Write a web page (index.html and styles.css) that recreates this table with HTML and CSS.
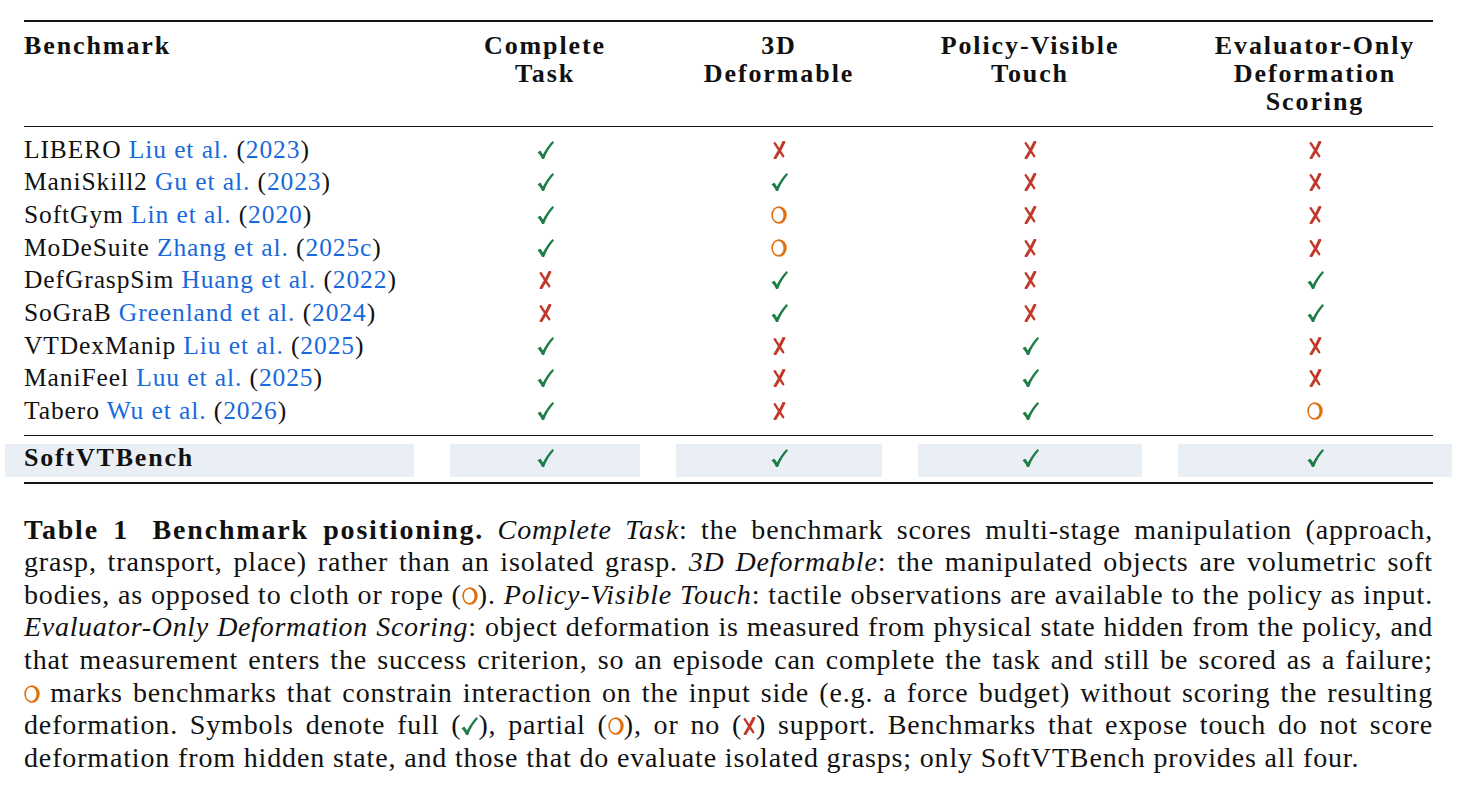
FILE: index.html
```html
<!DOCTYPE html>
<html>
<head>
<meta charset="utf-8">
<link rel="stylesheet" href="styles.css">
</head>
<body>
<svg class="defs" aria-hidden="true">
  <symbol id="ck" viewBox="0 0 17 18">
    <path fill="#1e7d46" d="M0.5 11.2 C1.7 10.3 2.8 9.8 3.6 9.7 L5.9 13.6 C8.4 8.6 11.7 4 15.6 0 L17 1.6 C12.8 6.3 9.5 11.8 7.1 17.9 L5 17.9 C3.8 15.4 2.3 13 0.5 11.2 Z"/>
  </symbol>
  <symbol id="cx" viewBox="0 0 14 18">
    <path d="M11.8 1.2 C9.4 6.6 6.4 12 3.1 17" stroke="#c0392b" stroke-width="3" fill="none" stroke-linecap="round"/>
    <path d="M2.7 2.2 C5.2 6.2 8 10.4 11.2 15.2" stroke="#c0392b" stroke-width="2.4" fill="none" stroke-linecap="round"/>
  </symbol>
  <symbol id="co" viewBox="0 0 16 18">
    <path fill="#e0700e" fill-rule="evenodd" d="M8 0.3 A7.7 8.7 0 1 1 8 17.7 A7.7 8.7 0 1 1 8 0.3 Z M7.2 1.9 A5.3 7.1 0 1 0 7.2 16.1 A5.3 7.1 0 1 0 7.2 1.9 Z"/>
  </symbol>
</svg>

<div class="page">
  <div class="rule thick"></div>
  <div class="row head">
    <div class="first">Benchmark</div>
    <div class="c">Complete<br>Task</div>
    <div class="c">3D<br>Deformable</div>
    <div class="c">Policy-Visible<br>Touch</div>
    <div class="c">Evaluator-Only<br>Deformation<br>Scoring</div>
  </div>
  <div class="rule"></div>

  <div class="tbody">
    <div class="row">
      <div class="first">LIBERO <span class="cite">Liu et al.</span> (<span class="cite">2023</span>)</div>
      <div class="c"><svg class="s ck"><use href="#ck"/></svg></div>
      <div class="c"><svg class="s cx"><use href="#cx"/></svg></div>
      <div class="c"><svg class="s cx"><use href="#cx"/></svg></div>
      <div class="c"><svg class="s cx"><use href="#cx"/></svg></div>
    </div>
    <div class="row">
      <div class="first">ManiSkill2 <span class="cite">Gu et al.</span> (<span class="cite">2023</span>)</div>
      <div class="c"><svg class="s ck"><use href="#ck"/></svg></div>
      <div class="c"><svg class="s ck"><use href="#ck"/></svg></div>
      <div class="c"><svg class="s cx"><use href="#cx"/></svg></div>
      <div class="c"><svg class="s cx"><use href="#cx"/></svg></div>
    </div>
    <div class="row">
      <div class="first">SoftGym <span class="cite">Lin et al.</span> (<span class="cite">2020</span>)</div>
      <div class="c"><svg class="s ck"><use href="#ck"/></svg></div>
      <div class="c"><svg class="s co"><use href="#co"/></svg></div>
      <div class="c"><svg class="s cx"><use href="#cx"/></svg></div>
      <div class="c"><svg class="s cx"><use href="#cx"/></svg></div>
    </div>
    <div class="row">
      <div class="first">MoDeSuite <span class="cite">Zhang et al.</span> (<span class="cite">2025c</span>)</div>
      <div class="c"><svg class="s ck"><use href="#ck"/></svg></div>
      <div class="c"><svg class="s co"><use href="#co"/></svg></div>
      <div class="c"><svg class="s cx"><use href="#cx"/></svg></div>
      <div class="c"><svg class="s cx"><use href="#cx"/></svg></div>
    </div>
    <div class="row">
      <div class="first">DefGraspSim <span class="cite">Huang et al.</span> (<span class="cite">2022</span>)</div>
      <div class="c"><svg class="s cx"><use href="#cx"/></svg></div>
      <div class="c"><svg class="s ck"><use href="#ck"/></svg></div>
      <div class="c"><svg class="s cx"><use href="#cx"/></svg></div>
      <div class="c"><svg class="s ck"><use href="#ck"/></svg></div>
    </div>
    <div class="row">
      <div class="first">SoGraB <span class="cite">Greenland et al.</span> (<span class="cite">2024</span>)</div>
      <div class="c"><svg class="s cx"><use href="#cx"/></svg></div>
      <div class="c"><svg class="s ck"><use href="#ck"/></svg></div>
      <div class="c"><svg class="s cx"><use href="#cx"/></svg></div>
      <div class="c"><svg class="s ck"><use href="#ck"/></svg></div>
    </div>
    <div class="row">
      <div class="first">VTDexManip <span class="cite">Liu et al.</span> (<span class="cite">2025</span>)</div>
      <div class="c"><svg class="s ck"><use href="#ck"/></svg></div>
      <div class="c"><svg class="s cx"><use href="#cx"/></svg></div>
      <div class="c"><svg class="s ck"><use href="#ck"/></svg></div>
      <div class="c"><svg class="s cx"><use href="#cx"/></svg></div>
    </div>
    <div class="row">
      <div class="first">ManiFeel <span class="cite">Luu et al.</span> (<span class="cite">2025</span>)</div>
      <div class="c"><svg class="s ck"><use href="#ck"/></svg></div>
      <div class="c"><svg class="s cx"><use href="#cx"/></svg></div>
      <div class="c"><svg class="s ck"><use href="#ck"/></svg></div>
      <div class="c"><svg class="s cx"><use href="#cx"/></svg></div>
    </div>
    <div class="row">
      <div class="first">Tabero <span class="cite">Wu et al.</span> (<span class="cite">2026</span>)</div>
      <div class="c"><svg class="s ck"><use href="#ck"/></svg></div>
      <div class="c"><svg class="s cx"><use href="#cx"/></svg></div>
      <div class="c"><svg class="s ck"><use href="#ck"/></svg></div>
      <div class="c"><svg class="s co"><use href="#co"/></svg></div>
    </div>
  </div>

  <div class="rule"></div>
  <div class="row hl">
    <div class="first"><b class="bname">SoftVTBench</b></div>
    <div class="c"><svg class="s ck"><use href="#ck"/></svg></div>
    <div class="c"><svg class="s ck"><use href="#ck"/></svg></div>
    <div class="c"><svg class="s ck"><use href="#ck"/></svg></div>
    <div class="c"><svg class="s ck"><use href="#ck"/></svg></div>
  </div>
  <div class="rule thick bottom"></div>

  <div class="caption">
    <span class="ln"><b class="lbl">Table 1</b> <b class="bold">Benchmark positioning.</b> <i>Complete Task</i>: the benchmark scores multi-stage manipulation (approach,</span>
    <span class="ln">grasp, transport, place) rather than an isolated grasp. <i>3D Deformable</i>: the manipulated objects are volumetric soft</span>
    <span class="ln">bodies, as opposed to cloth or rope (<svg class="s co"><use href="#co"/></svg>). <i>Policy-Visible Touch</i>: tactile observations are available to the policy as input.</span>
    <span class="ln tight"><i>Evaluator-Only Deformation Scoring</i>: object deformation is measured from physical state hidden from the policy, and</span>
    <span class="ln">that measurement enters the success criterion, so an episode can complete the task and still be scored as a failure;</span>
    <span class="ln"><svg class="s co"><use href="#co"/></svg> marks benchmarks that constrain interaction on the input side (e.g. a force budget) without scoring the resulting</span>
    <span class="ln">deformation. Symbols denote full (<svg class="s ck"><use href="#ck"/></svg>), partial (<svg class="s co"><use href="#co"/></svg>), or no (<svg class="s cx"><use href="#cx"/></svg>) support. Benchmarks that expose touch do not score</span>
    <span class="ln last">deformation from hidden state, and those that do evaluate isolated grasps; only SoftVTBench provides all four.</span>
  </div>
</div>
</body>
</html>
```

FILE: styles.css
```css
html, body {
  margin: 0;
  padding: 0;
  background: #ffffff;
}

body {
  font-family: "Liberation Serif", "Times New Roman", serif;
  color: #111111;
}

.defs {
  position: absolute;
  width: 0;
  height: 0;
  overflow: hidden;
}

.page {
  width: 1447px;
  padding: 20px 0 0 5px;
}

.rule {
  height: 1px;
  background: #151515;
  margin: 0 19px;
}

.rule.thick {
  height: 2px;
}

.rule.bottom {
  margin-top: 5px;
}

.row {
  display: grid;
  grid-template-columns: 409px 190px 206px 224px 274px;
  column-gap: 36px;
}

.first {
  padding-left: 19px;
  text-align: left;
}

.c {
  text-align: center;
}

.head {
  padding: 10px 0;
  font-weight: bold;
  font-size: 26px;
  line-height: 28px;
  letter-spacing: 1.9px;
}

.tbody {
  padding: 6.5px 0 7px;
}

.tbody .row {
  height: 32.7px;
  font-size: 25.5px;
  line-height: 32.7px;
  letter-spacing: 0.9px;
}

.cite {
  color: #1769dc;
}

.hl {
  margin-top: 8px;
  font-size: 25.5px;
  line-height: 28px;
}

.hl > div {
  height: 33px;
  background: #e9eff4;
}

.bname {
  font-size: 26px;
  letter-spacing: 1.8px;
}

.s {
  display: inline-block;
  vertical-align: -1px;
}

.s.ck {
  width: 17px;
  height: 18px;
}

.s.cx {
  width: 14px;
  height: 18px;
}

.s.co {
  width: 16px;
  height: 18px;
}

.caption {
  margin-top: 30px;
  padding: 0 19px;
  font-size: 28px;
  line-height: 32.6px;
  letter-spacing: 0.85px;
}

.ln {
  display: block;
  white-space: nowrap;
  text-align: justify;
  text-align-last: justify;
}

.ln.tight {
  letter-spacing: 0.7px;
}

.ln.last {
  text-align-last: left;
}

.lbl {
  margin-right: 10px;
  letter-spacing: 1.8px;
}

.bold {
  letter-spacing: 1.8px;
}
```
